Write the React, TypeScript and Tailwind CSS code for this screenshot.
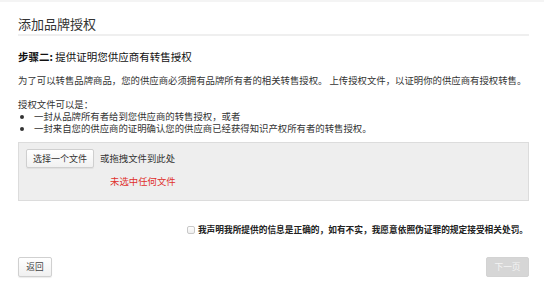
const font = "font-['Microsoft_YaHei','Noto_Sans_CJK_SC','Liberation_Sans',sans-serif]";

function Button({
  children,
  className,
}: {
  children: React.ReactNode;
  className?: string;
}) {
  return (
    <button
      type="button"
      className={`flex items-center justify-center rounded-[2px] border ${className ?? ""}`}
    >
      {children}
    </button>
  );
}

export default function App() {
  return (
    <div
      className={`h-[302px] w-[544px] border-t-2 border-[#f4f4f4] bg-white ${font}`}
    >
      <div className="ml-[18px] w-[511px]">
        <div className="border-b-2 border-[#efefef] pt-[12px] pb-0 text-[13px] leading-[20px] text-[#333]">
          添加品牌授权
        </div>

        <div className="mt-[14px] text-[10.5px] leading-[14px] text-[#111]">
          <span className="font-bold">步骤二:</span> 提供证明您供应商有转售授权
        </div>

        <p className="mt-[9px] text-[9.4px] leading-[14px] text-[#333]">
          为了可以转售品牌商品，您的供应商必须拥有品牌所有者的相关转售授权。
          上传授权文件，以证明你的供应商有授权转售。
        </p>

        <div className="mt-[11px] text-[9.4px] leading-[12px] text-[#333]">
          <div>授权文件可以是：</div>
          <ul className="list-disc pl-[16px]">
            <li>一封从品牌所有者给到您供应商的转售授权，或者</li>
            <li>一封来自您的供应商的证明确认您的供应商已经获得知识产权所有者的转售授权。</li>
          </ul>
        </div>

        <div className="mt-[8px] border border-[#dcdcdc] bg-[#eeeeee] pt-[6px] pb-[12px] pl-[7px]">
          <div className="flex items-center gap-[6px]">
            <Button className="h-[19px] w-[68px] border-[#cfcfcf] bg-[linear-gradient(#ffffff,#f1f1f1)] text-[9px] text-[#333] shadow-[0_1px_1px_rgba(0,0,0,0.06)]">
              选择一个文件
            </Button>
            <span className="text-[9.4px] text-[#333]">或拖拽文件到此处</span>
          </div>
          <div className="mt-[6px] ml-[84px] text-[9.4px] leading-[14px] text-[#e0302b]">
            未选中任何文件
          </div>
        </div>

        <label className="mt-[22px] flex items-center justify-end gap-[3px] pr-[1px] text-[8.7px] leading-[14px] font-bold text-[#222]">
          <span className="h-[8px] w-[8px] rounded-[2px] border border-[#c8c8c8] bg-[linear-gradient(#ffffff,#eeeeee)]" />
          我声明我所提供的信息是正确的，如有不实，我愿意依照伪证罪的规定接受相关处罚。
        </label>

        <div className="mt-[20px] flex justify-between">
          <Button className="h-[20px] w-[34px] border-[#d0d0d0] bg-[linear-gradient(#ffffff,#f0f0f0)] text-[8.7px] text-[#444] shadow-[0_1px_1px_rgba(0,0,0,0.08)]">
            返回
          </Button>
          <Button className="h-[20px] w-[43px] border-[#d3d3d3] bg-[#d6d6d6] text-[8.7px] text-[#f4f4f4]">
            下一页
          </Button>
        </div>
      </div>
    </div>
  );
}
